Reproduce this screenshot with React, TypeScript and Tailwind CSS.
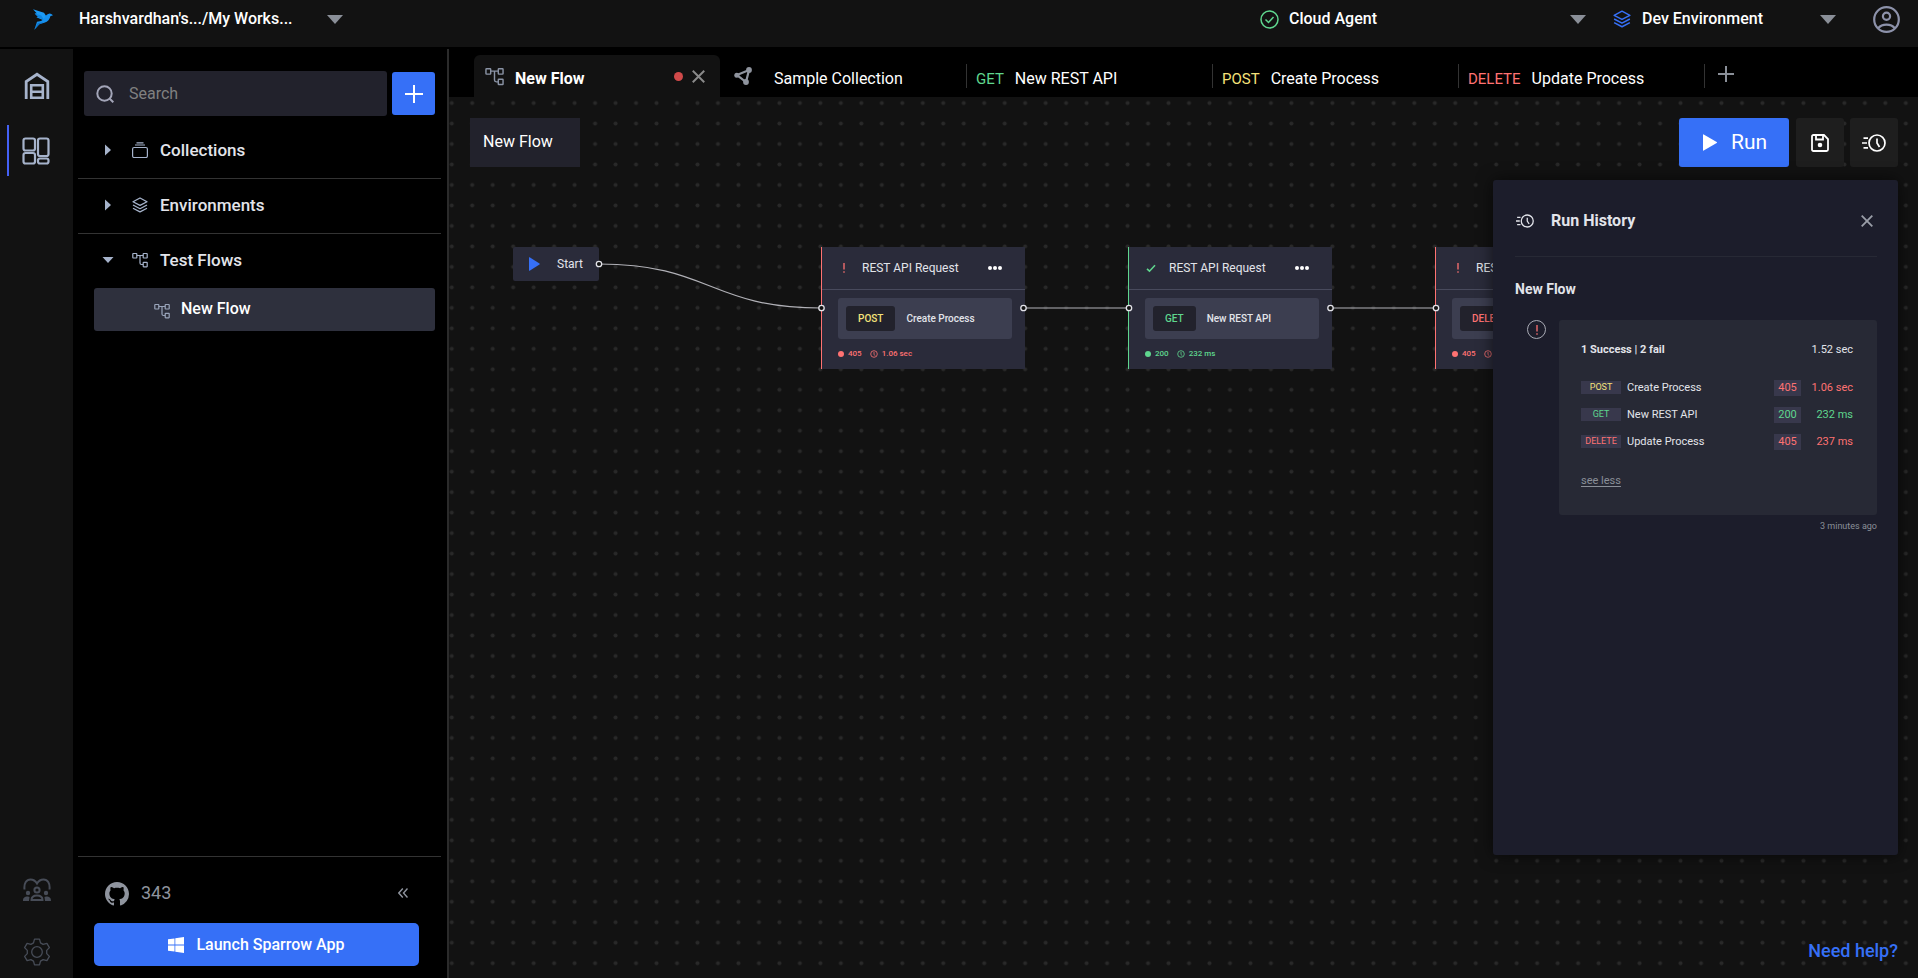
import type { ReactNode } from "react";

type Method = "POST" | "GET" | "DELETE";

const methodColor: Record<Method, string> = {
  POST: "text-[#f5e27a]",
  GET: "text-[#5fd68e]",
  DELETE: "text-[#ff7272]",
};

const requests: {
  method: Method;
  name: string;
  code: number;
  time: string;
  ok: boolean;
}[] = [
  { method: "POST", name: "Create Process", code: 405, time: "1.06 sec", ok: false },
  { method: "GET", name: "New REST API", code: 200, time: "232 ms", ok: true },
  { method: "DELETE", name: "Update Process", code: 405, time: "237 ms", ok: false },
];

const nodePlace = ["left-[372px]", "left-[679px]", "left-[986px]"];

export default function App() {
  return (
    <div className="flex h-screen min-h-[640px] flex-col gap-[2px] overflow-hidden bg-black font-['Roboto',sans-serif] text-white">
      <Header />
      <div className="flex min-h-0 flex-1">
        <Rail />
        <Sidebar />
        <main className="-mt-[2px] flex min-w-0 flex-1 flex-col">
          <TabBar />
          <Canvas />
        </main>
      </div>
    </div>
  );
}

function Header() {
  return (
    <header className="flex h-[47px] shrink-0 items-start justify-between bg-[#121212] pr-[18px] pl-[33px]">
      <div className="flex h-[38px] items-center">
        <BirdLogo />
        <Picker
          label="Workspace"
          value="Harshvardhan's.../My Works..."
          className="ml-[26px] w-[264px]"
        />
      </div>
      <div className="flex h-[38px] items-center">
        <CheckCircle />
        <Picker label="Agent" value="Cloud Agent" className="ml-[10px] w-[297px]" />
        <LayersIcon className="ml-[27px] size-[18px] text-[#3670f7]" />
        <Picker label="Environment" value="Dev Environment" className="ml-[11px] w-[194px]" />
        <button aria-label="Profile" className="ml-[37px] text-[#8d92aa]">
          <svg viewBox="0 0 27 27" className="size-[27px]" fill="none" stroke="currentColor" strokeWidth="2.2">
            <circle cx="13.5" cy="13.5" r="12.3" />
            <circle cx="13.5" cy="10.3" r="3.6" />
            <path d="M5 22.4c2-2.5 5-3.8 8.500-3.800s6.500 1.300 8.500 3.800" />
          </svg>
        </button>
      </div>
    </header>
  );
}

function Picker({ label, value, className }: { label: string; value: string; className: string }) {
  return (
    <div className={`grid items-center ${className}`}>
      <select
        aria-label={label}
        className="col-start-1 row-start-1 w-full appearance-none bg-transparent pr-6 text-base leading-6 font-medium text-white outline-none"
      >
        <option>{value}</option>
      </select>
      <svg
        viewBox="0 0 16 9"
        className="pointer-events-none col-start-1 row-start-1 h-[9px] w-4 justify-self-end text-[#8a8f98]"
        fill="currentColor"
      >
        <path d="M0 0h16L8 9z" />
      </svg>
    </div>
  );
}

function Rail() {
  return (
    <nav className="flex w-[73px] shrink-0 flex-col items-center bg-[#121212] pt-3">
      <button aria-label="Home" className="flex h-[50px] w-full items-center justify-center text-[#a6b3cb]">
        <svg viewBox="0 0 26 28" className="h-7 w-[26px]" fill="none" stroke="currentColor">
          <path d="M2.200 27V9.500L13 2.300l10.800 7.200V27" strokeWidth="2.800" />
          <path d="M7.200 27V13.200h11.600V27M7.200 19.800h11.600M7.200 25.800h11.600" strokeWidth="2.600" />
        </svg>
      </button>
      <button
        aria-label="Workspace"
        className="mt-[14px] flex h-[51px] w-full items-center pl-[7px] text-[#a6b3cb]"
      >
        <span className="h-full w-[2px] bg-[#4461f5]" />
        <svg viewBox="0 0 28 28" className="ml-[13px] size-7" fill="none" stroke="currentColor" strokeWidth="2.200">
          <rect x="1.500" y="1.500" width="11.500" height="12" rx="2" />
          <rect x="16" y="1.500" width="10.500" height="17.500" rx="2" />
          <rect x="1.500" y="16" width="11.500" height="10.500" rx="2" />
          <rect x="16" y="21.500" width="10.500" height="5" rx="2" />
        </svg>
      </button>
      <button aria-label="Community" className="mt-auto flex h-[72px] w-full items-center justify-center text-[#474c57]">
        <svg viewBox="0 0 28 24" className="h-6 w-7" fill="none" stroke="currentColor" strokeWidth="2">
          <path d="M1.500 11.500C.8 5 3.500 1.500 7.500 1.500c3 0 5 1.500 6.500 4 1.500-2.500 3.500-4 6.500-4 4 0 6.700 3.500 6 10" />
          <circle cx="14" cy="12" r="2.600" />
          <path d="M8.500 22c0-3 2-4.500 5.500-4.500s5.500 1.500 5.500 4.500z" />
          <path d="M0 23c0-3 1-4.500 5-4.500l1.500.5L6 23zM28 23c0-3-1-4.500-5-4.500l-1.500.5.5 4z" fill="currentColor" stroke="none" />
          <circle cx="5" cy="15" r="2.200" fill="currentColor" stroke="none" />
          <circle cx="23" cy="15" r="2.200" fill="currentColor" stroke="none" />
        </svg>
      </button>
      <button aria-label="Settings" className="flex h-[52px] w-full items-center justify-center text-[#474c57]">
        <svg viewBox="0 0 28 28" className="size-7" fill="none" stroke="currentColor" strokeWidth="1.300" strokeLinejoin="round">
          <path d="M11.500 1.200h5l1 3.700 2.600 1.500 3.800-1.100 2.500 4.300-2.700 2.800v3.200l2.700 2.800-2.500 4.300-3.800-1.100-2.600 1.500-1 3.700h-5l-1-3.700-2.600-1.500-3.800 1.100-2.500-4.300 2.700-2.800v-3.200L1.600 9.600l2.500-4.300 3.800 1.100 2.600-1.500z" />
          <circle cx="14" cy="14" r="5.300" />
        </svg>
      </button>
    </nav>
  );
}

function Sidebar() {
  return (
    <aside className="flex w-[376px] shrink-0 flex-col border-r-2 border-[#2b2b2b] bg-black pr-[6px] pl-[5px]">
      <div className="flex items-center gap-[5px] pt-[22px] pr-[6px] pl-[6px]">
        <label className="flex h-[45px] flex-1 items-center rounded-[3px] bg-[#22222c] pl-3">
          <svg viewBox="0 0 18 18" className="size-[18px] text-[#a3a5b8]" fill="none" stroke="currentColor" strokeWidth="2">
            <circle cx="8.500" cy="8.500" r="7.200" />
            <path d="m13.500 13.500 3.800 3.800" />
          </svg>
          <input
            type="search"
            placeholder="Search"
            aria-label="Search"
            className="ml-[15px] w-0 flex-1 bg-transparent text-base leading-6 outline-none placeholder:text-[#808080]"
          />
        </label>
        <button aria-label="Add" className="flex size-[43px] items-center justify-center rounded-[3px] bg-[#3670f7]">
          <svg viewBox="0 0 18 18" className="size-[18px]" stroke="currentColor" strokeWidth="2">
            <path d="M9 0v18M0 9h18" />
          </svg>
        </button>
      </div>
      <div className="flex flex-col pt-2">
        <Section title="Collections" icon={<CollectionIcon />} />
        <Section title="Environments" icon={<LayersIcon className="size-4" />} />
        <Section title="Test Flows" icon={<FlowIcon className="size-4" />} open />
      </div>
      <button className="mr-[6px] ml-4 flex h-[43px] items-center gap-[11px] rounded-[3px] bg-[#2e303d] pb-[2px] pl-[60px] text-base font-medium">
        <FlowIcon className="mt-1 size-4 text-[#9aa5bb]" />
        New Flow
      </button>

      <div className="mt-auto border-t border-[#333333] pr-[22px] pb-3 pl-4">
        <div className="flex h-[66px] items-center justify-between pt-[5px] pr-[11px] pl-[11px] text-[#8f949e]">
          <a href="#github" className="flex items-center gap-3 text-lg">
            <svg viewBox="0 0 16 16" className="mt-[2px] size-6" fill="currentColor">
              <path d="M8 0C3.580 0 0 3.580 0 8c0 3.540 2.290 6.530 5.470 7.590.4.070.55-.17.55-.38 0-.19-.01-.82-.01-1.490-2.010.37-2.530-.49-2.690-.94-.09-.23-.48-.94-.82-1.130-.28-.15-.68-.52-.01-.53.63-.01 1.080.58 1.230.82.72 1.210 1.870.87 2.330.66.07-.52.28-.87.51-1.070-1.780-.2-3.640-.89-3.640-3.950 0-.87.31-1.590.82-2.150-.08-.2-.36-1.020.08-2.120 0 0 .67-.21 2.200.82.64-.18 1.320-.27 2-.27s1.360.09 2 .27c1.530-1.040 2.200-.82 2.200-.82.44 1.100.16 1.920.08 2.120.51.56.82 1.270.82 2.150 0 3.070-1.870 3.750-3.650 3.950.29.25.54.73.54 1.480 0 1.070-.01 1.930-.01 2.200 0 .21.15.46.55.38A8.010 8.010 0 0 0 16 8c0-4.420-3.580-8-8-8" />
            </svg>
            343
          </a>
          <button aria-label="Collapse sidebar">
            <svg viewBox="0 0 10 10" className="size-[10px]" fill="none" stroke="currentColor" strokeWidth="1.400">
              <path d="M4.800.5.800 5l4 4.500M9.500.500 5.500 5l4 4.500" />
            </svg>
          </button>
        </div>
        <button className="flex h-[43px] w-full items-center justify-center gap-3 rounded-[5px] bg-[#3670f7] text-base font-medium">
          <svg viewBox="0 0 16 16" className="size-4" fill="currentColor">
            <path d="M0 2.300 6.500 1.400v6.200H0zM7.300 1.300 16 0v7.600H7.300zM0 8.400h6.500v6.200L0 13.700zM7.300 8.400H16V16l-8.700-1.300z" />
          </svg>
          Launch Sparrow App
        </button>
      </div>
    </aside>
  );
}

function Section({ title, icon, open }: { title: string; icon: ReactNode; open?: boolean }) {
  return (
    <button
      aria-expanded={!!open}
      className={`flex items-center border-b pb-[2px] pl-6 text-[#a6b3cb] ${
        open ? "h-[54px] border-transparent" : "h-[55px] border-[#333333]"
      }`}
    >
      <span className="flex w-[30px]">
        <svg viewBox="0 0 12 12" className={`size-3 ${open ? "rotate-90" : ""}`} fill="currentColor">
          <path d="M3 .5 9 6l-6 5.500z" />
        </svg>
      </span>
      {icon}
      <span className="ml-3 text-[17px] leading-6 font-medium text-[#e2e4ea]">{title}</span>
    </button>
  );
}

function TabBar() {
  return (
    <div className="flex h-[50px] shrink-0 items-end overflow-hidden bg-black pl-[25px]">
      <div className="flex h-[42px] w-[246px] items-center rounded-t-md bg-[#121212] pr-[15px] pl-[11px]">
        <FlowIcon className="size-[19px] text-[#8a93a5]" />
        <button className="ml-[11px] flex-1 pt-[6px] text-left text-base leading-6 font-bold">New Flow</button>
        <span className="mr-[9px] size-[9px] rounded-full bg-[#d04a4a]" />
        <button aria-label="Close tab" className="text-[#8a8a8a]">
          <CloseIcon className="size-[13px]" />
        </button>
      </div>
      <button className="flex h-[42px] w-[246px] items-center pl-[14px] text-base leading-6">
        <svg viewBox="0 0 18 18" className="size-[18px] text-[#8f949e]" fill="none" stroke="currentColor" strokeWidth="2.200">
          <path d="M3 8 15 3l-3 12z" />
          <circle cx="2.800" cy="8.200" r="2.500" fill="currentColor" stroke="none" />
          <circle cx="15" cy="3" r="2.900" fill="currentColor" stroke="none" />
          <circle cx="12" cy="15" r="2.900" fill="currentColor" stroke="none" />
        </svg>
        <span className="ml-[22px] pt-[6px]">Sample Collection</span>
      </button>
      {[requests[1], requests[0], requests[2]].map((r) => (
        <div key={r.name} className="flex h-[42px] w-[246px] items-center">
          <span className="h-6 w-px bg-[#333333]" />
          <button className="flex items-baseline gap-[11px] pt-[6px] pl-[9px] text-base leading-6">
            <span className={`text-[15px] ${methodColor[r.method]}`}>{r.method}</span>
            {r.name}
          </button>
        </div>
      ))}
      <div className="flex h-[42px] items-center">
        <span className="h-6 w-px bg-[#333333]" />
        <button aria-label="New tab" className="mb-1 ml-[13px] text-[#8a8f98]">
          <svg viewBox="0 0 16 16" className="size-4" stroke="currentColor" strokeWidth="2">
            <path d="M8 0v16M0 8h16" />
          </svg>
        </button>
      </div>
    </div>
  );
}

function Canvas() {
  return (
    <section className="relative flex min-h-0 flex-1 flex-col overflow-hidden bg-[#121212] px-5 pt-[21px] pb-[13px]">
      <svg className="absolute inset-0 size-full">
        <defs>
          <pattern id="grid" x="-7.500" y="-4.200" width="20.480" height="20.480" patternUnits="userSpaceOnUse">
            <circle cx="10.240" cy="10.240" r="2" fill="#292929" />
          </pattern>
        </defs>
        <rect width="100%" height="100%" fill="url(#grid)" />
        <g fill="none" stroke="#b1b1b7" strokeWidth="1.200">
          <path d="M150 167C261 167 261 211 372 211" />
          <path d="M576 211H679M883 211H986" />
        </g>
      </svg>

      <div className="absolute top-[150px] left-16 flex h-[34px] w-[86px] items-center gap-[17px] rounded-[2px] bg-[#2a2b3a] pl-4 text-xs text-[#e2e4ea]">
        <svg viewBox="0 0 11 14" className="h-[14px] w-[11px] text-[#3670f7]" fill="currentColor">
          <path d="M0 .6v12.800q0 .6.600.300L10.500 7.500q.5-.5 0-1L.6.300Q0 0 0 .6" />
        </svg>
        Start
      </div>
      {requests.map((r, i) => (
        <RequestNode key={r.name} request={r} place={nodePlace[i]} />
      ))}
      <svg className="pointer-events-none absolute inset-0 size-full">
        <g fill="#121212" stroke="#e4e4ea" strokeWidth="1.300">
          <circle cx="150" cy="167" r="2.700" />
          {[372.5, 574.5, 680, 881.5, 987].map((x) => (
            <circle key={x} cx={x} cy="211" r="2.700" />
          ))}
        </g>
      </svg>

      <div className="relative flex items-start justify-between">
        <input
          aria-label="Flow name"
          defaultValue="New Flow"
          className="ml-[1px] h-[49px] w-[110px] bg-[#22222c] px-[13px] pb-[2px] text-base outline-none"
        />
        <div className="flex items-center">
          <button className="flex h-[49px] w-[110px] items-center gap-[14px] rounded-[3px] bg-[#3670f7] pl-6 text-[21px]">
            <svg viewBox="0 0 14 17" className="h-[17px] w-[14px]" fill="currentColor">
              <path d="M0 .8v15.400q0 .8.700.4l13-7.600q.6-.5 0-1L.7.4Q0 0 0 .8" />
            </svg>
            Run
          </button>
          <button aria-label="Save" className="ml-[7px] flex h-[49px] w-12 items-center justify-center rounded-[3px] bg-[#1e1e1e]">
            <svg viewBox="0 0 18 18" className="size-[18px]" fill="none" stroke="currentColor" strokeWidth="1.800">
              <path d="M1 2.500Q1 1 2.500 1H13l4 4v10.500q0 1.500-1.500 1.500h-13Q1 17 1 15.500z" />
              <path d="M5 1v4.500h7V1" />
              <circle cx="9" cy="11" r="2.300" fill="currentColor" stroke="none" />
            </svg>
          </button>
          <button aria-label="Run history" className="ml-[6px] flex h-[49px] w-12 items-center justify-center rounded-[3px] bg-[#1e1e1e]">
            <HistoryIcon className="h-[18px] w-6" />
          </button>
        </div>
      </div>

      <RunHistory />
      <a href="#help" className="relative mt-auto self-end text-lg leading-7 font-medium text-[#3670f7]">
        Need help?
      </a>
    </section>
  );
}

function RequestNode({ request, place }: { request: (typeof requests)[number]; place: string }) {
  const tone = request.ok ? "text-[#5fd68e]" : "text-[#ff7272]";
  return (
    <article
      className={`absolute top-[150px] flex h-[122px] w-[204px] flex-col border-l bg-[#2a2b3a] ${place} ${
        request.ok ? "border-[#5fd68e]" : "border-[#ff7272]"
      }`}
    >
      <div className="flex h-[43px] shrink-0 items-center border-b border-[#484a5c] pr-[23px] pl-[17px]">
        <span className={`flex w-[23px] ${tone}`}>
          {request.ok ? (
            <svg viewBox="0 0 10 10" className="size-[10px]" fill="none" stroke="currentColor" strokeWidth="1.600">
              <path d="m1 5.800 2.500 2.400L9 2.200" />
            </svg>
          ) : (
            <ExclamationIcon className="h-[10px] w-[10px]" />
          )}
        </span>
        <h3 className="text-xs text-[#e2e4ea]">REST API Request</h3>
        <button aria-label="More" className="ml-auto">
          <svg viewBox="0 0 14 4" className="h-1 w-[14px]" fill="currentColor">
            <circle cx="2" cy="2" r="2" />
            <circle cx="7" cy="2" r="2" />
            <circle cx="12" cy="2" r="2" />
          </svg>
        </button>
      </div>
      <div className="mt-2 mr-[13px] ml-4 flex h-[41px] items-center gap-[11px] rounded-[3px] bg-[#3c3e50] pl-2 text-[10px] font-medium text-[#e2e4ea]">
        <span className={`rounded-[3px] bg-[#22222c] px-3 py-[5px] leading-[15px] ${methodColor[request.method]}`}>
          {request.method}
        </span>
        {request.name}
      </div>
      <div className={`mt-[9px] ml-4 flex items-center text-[8px] leading-3 font-medium ${tone}`}>
        <span className="mr-1 size-[6px] rounded-full bg-current" />
        {request.code}
        <svg viewBox="0 0 8 8" className="mr-1 ml-2 size-2" fill="none" stroke="currentColor" strokeWidth=".8">
          <circle cx="4" cy="4" r="3.300" />
          <path d="M4 2v2.200l1 1.500" />
        </svg>
        {request.time}
      </div>
    </article>
  );
}

function RunHistory() {
  return (
    <div className="relative mt-[13px] flex h-[675px] w-[405px] shrink-0 flex-col self-end rounded-[3px] bg-[#1c1d2b] pr-[21px] pl-[22px] text-[#e2e4ea] shadow-[0_0_16px_rgba(0,0,0,0.6)]">
      <div className="flex h-[77px] shrink-0 items-center border-b border-[#272935] pt-[6px] pr-1">
        <HistoryIcon className="ml-[1px] h-[14px] w-[18px]" />
        <h2 className="ml-[17px] text-base leading-6 font-bold">Run History</h2>
        <button aria-label="Close run history" className="ml-auto text-[#9a9ea8]">
          <CloseIcon className="size-3" />
        </button>
      </div>
      <h3 className="mt-[22px] text-sm leading-5 font-bold">New Flow</h3>
      <div className="mt-[21px] flex gap-[13px] pl-3">
        <span className="flex size-[19px] items-center justify-center rounded-full border border-[#a9abb5] text-[#ff7272]">
          <ExclamationIcon className="size-[10px]" />
        </span>
        <div className="h-[195px] flex-1 rounded-[3px] bg-[#272935] pt-[22px] pr-6 pl-[22px] text-[11px] leading-4">
          <div className="flex justify-between">
            <span className="font-bold">1 Success | 2 fail</span>
            <span>1.52 sec</span>
          </div>
          <table className="mt-4 w-full">
            <tbody>
              {requests.map((r) => (
                <tr key={r.name} className="h-[27px]">
                  <td className="w-[46px] p-0">
                    <span
                      className={`block h-[13px] w-10 bg-[#38384c] text-center text-[9px] leading-3 ${methodColor[r.method]}`}
                    >
                      {r.method}
                    </span>
                  </td>
                  <td className="p-0">{r.name}</td>
                  <td className={`w-[27px] p-0 ${r.ok ? "text-[#5fd68e]" : "text-[#ff7272]"}`}>
                    <span className="block bg-[#38384c] text-center">{r.code}</span>
                  </td>
                  <td className={`w-[52px] p-0 text-right ${r.ok ? "text-[#5fd68e]" : "text-[#ff7272]"}`}>
                    {r.time}
                  </td>
                </tr>
              ))}
            </tbody>
          </table>
          <button className="mt-[18px] text-[#8a8f98] underline underline-offset-2">see less</button>
        </div>
      </div>
      <p className="mt-1 text-right text-[9px] leading-[14px] text-[#8a8f98]">3 minutes ago</p>
    </div>
  );
}

function BirdLogo() {
  return (
    <svg viewBox="0 0 60 62" className="h-[21px] w-5">
      <path d="M0 0l33 11 9 13-8 10-6-2-18-8 6-1L5 13l6-1z" fill="#1c9bf6" />
      <path d="M5 13l20 6 9 15-18-9z" fill="#0f85e0" />
      <path d="M32 30q8-16 18-17 5 0 10 5l-8 3q-2 14-18 20l-15 4L4 62l8-24q14-1 20-8" fill="#1690ee" />
      <path d="M4 62l10-20 18-3-13 6z" fill="#0f74c8" />
    </svg>
  );
}

function CheckCircle() {
  return (
    <svg viewBox="0 0 19 19" className="size-[19px] text-[#5fd68e]" fill="none" stroke="currentColor" strokeWidth="1.500">
      <circle cx="9.500" cy="9.500" r="8.500" />
      <path d="m5.500 9.500 3 3 5-5.500" />
    </svg>
  );
}

function FlowIcon({ className }: { className: string }) {
  return (
    <svg viewBox="0 0 16 16" className={className} fill="none" stroke="currentColor" strokeWidth="1.200">
      <rect x=".8" y="1.500" width="4" height="4.500" rx=".5" />
      <rect x="11.200" y="1.500" width="4" height="4.500" rx=".5" />
      <rect x="11.200" y="10.300" width="4" height="4.500" rx=".5" />
      <path d="M4.800 3.500h6.400M8 3.500v7.500q0 1.500 1.500 1.500h1.700" />
    </svg>
  );
}

function LayersIcon({ className }: { className: string }) {
  return (
    <svg viewBox="0 0 16 16" className={className} fill="none" stroke="currentColor" strokeWidth="1.300" strokeLinejoin="round">
      <path d="M8 1l7 3.700-7 3.700-7-3.700z" />
      <path d="M1 8l7 3.700L15 8M1 11.200l7 3.700 7-3.700" />
    </svg>
  );
}

function CollectionIcon() {
  return (
    <svg viewBox="0 0 16 16" className="size-4" fill="none" stroke="currentColor" strokeWidth="1.200">
      <rect x=".6" y="5.500" width="14.800" height="10" rx="1.500" />
      <path d="M3 3h10M4.500.8h7" />
    </svg>
  );
}

function CloseIcon({ className }: { className: string }) {
  return (
    <svg viewBox="0 0 12 12" className={className} stroke="currentColor" strokeWidth="1.800">
      <path d="m.7.700 10.600 10.600M11.300.700.700 11.300" />
    </svg>
  );
}

function ExclamationIcon({ className }: { className: string }) {
  return (
    <svg viewBox="0 0 10 10" className={className} stroke="currentColor" strokeWidth="1.300">
      <path d="M5 0v6.500M5 8.300v1.500" />
    </svg>
  );
}

function HistoryIcon({ className }: { className: string }) {
  return (
    <svg viewBox="0 0 24 18" className={className} fill="none" stroke="currentColor" strokeWidth="1.700">
      <circle cx="15" cy="9" r="8" />
      <path d="M15 4.500V9l2.500 4M1.500 4.200H6M0 9h5M1.500 13.800H6" />
    </svg>
  );
}
